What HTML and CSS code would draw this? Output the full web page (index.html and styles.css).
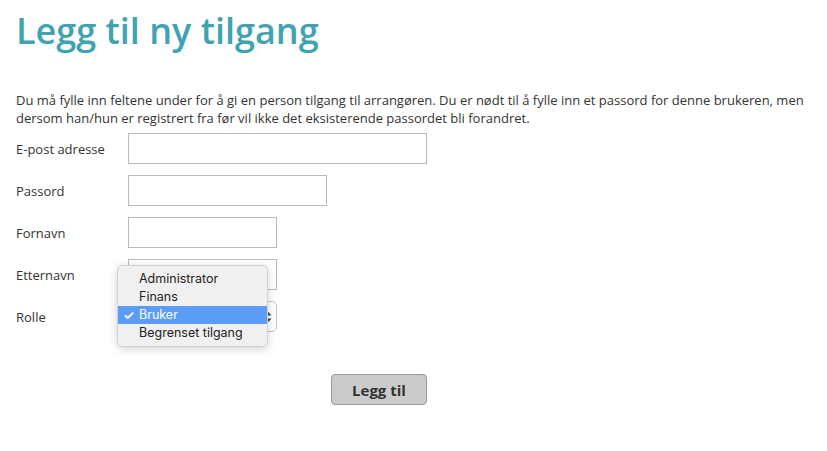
FILE: index.html
```html
<!DOCTYPE html>
<html lang="no">
<head>
  <meta charset="UTF-8">
  <meta name="viewport" content="width=device-width, initial-scale=1.0">
  <title>Legg til ny tilgang</title>
  <link rel="stylesheet" href="styles.css">
</head>
<body>

  <h1>Legg til ny tilgang</h1>

  <p class="intro">Du må fylle inn feltene under for å gi en person tilgang til arrangøren. Du er nødt til å fylle inn et passord for denne brukeren, men dersom han/hun er registrert fra før vil ikke det eksisterende passordet bli forandret.</p>

  <form class="access-form">
    <div class="row">
      <label for="email">E-post adresse</label>
      <input type="text" id="email" class="field field-wide">
    </div>
    <div class="row">
      <label for="password">Passord</label>
      <input type="password" id="password" class="field field-mid">
    </div>
    <div class="row">
      <label for="firstName">Fornavn</label>
      <input type="text" id="firstName" class="field field-short">
    </div>
    <div class="row">
      <label for="lastName">Etternavn</label>
      <input type="text" id="lastName" class="field field-short">
    </div>
    <div class="row">
      <label>Rolle</label>
      <div class="select-wrap">
        <!-- closed select, hidden under its open menu -->
        <div class="fake-select">
          <svg class="select-arrows" width="7" height="12" viewBox="0 0 7 12">
            <path d="M0.5 4.5 L3.5 1 L6.5 4.5 Z" fill="#444"/>
            <path d="M0.5 7.5 L3.5 11 L6.5 7.5 Z" fill="#444"/>
          </svg>
        </div>
        <ul class="select-menu">
          <li>Administrator</li>
          <li>Finans</li>
          <li class="selected"><span class="check">&#10003;</span>Bruker</li>
          <li>Begrenset tilgang</li>
        </ul>
      </div>
    </div>

    <div class="actions">
      <button type="button">Legg til</button>
    </div>
  </form>

</body>
</html>
```

FILE: styles.css
```css
body {
  font-family: "Open Sans", Arial, sans-serif;
  color: #333;
  margin: 0;
  padding: 0 16px;
  background: #fff;
}

h1 {
  font-size: 36px;
  font-weight: 600;
  color: #3fa3b0;
  margin: 4px 0 0 0;
  line-height: 53px;
}

.intro {
  font-size: 13px;
  line-height: 18px;
  margin: 34px 0 6px 0;
  color: #333;
}

.row {
  display: flex;
  align-items: center;
  height: 31px;
  margin-bottom: 11px;
}

.row label {
  width: 112px;
  font-size: 13px;
  flex-shrink: 0;
}

.field {
  height: 31px;
  box-sizing: border-box;
  border: 1px solid #b9b9b9;
  padding: 4px 6px;
  font-size: 13px;
}

.field-wide {
  width: 299px;
}

.field-mid {
  width: 199px;
}

.field-short {
  width: 149px;
}

.select-wrap {
  position: relative;
}

.fake-select {
  width: 149px;
  height: 31px;
  box-sizing: border-box;
  border: 1px solid #c4c4c4;
  border-radius: 5px;
  display: flex;
  align-items: center;
  justify-content: flex-end;
  padding: 0 4px 0 10px;
  background: #fff;
}

.select-menu {
  position: absolute;
  left: -11px;
  top: -36px;
  width: 149px;
  margin: 0;
  padding: 4px 0;
  list-style: none;
  background: #f0f0f0;
  border: 1px solid #d2d2d2;
  border-radius: 5px;
  box-shadow: 0 2px 8px rgba(0, 0, 0, 0.18);
  font-family: Inter, "Liberation Sans", sans-serif;
  font-size: 12.5px;
  color: #222;
}

.select-menu li {
  height: 18px;
  line-height: 18px;
  padding-left: 21px;
  position: relative;
}

.select-menu li.selected {
  background: #5b9cf7;
  color: #fff;
}

.check {
  position: absolute;
  left: 5px;
  top: 0;
  font-size: 13px;
  font-weight: 700;
}

.actions {
  padding: 31px 0 0 315px;
}

button {
  width: 96px;
  height: 31px;
  font-family: "Open Sans", Arial, sans-serif;
  font-size: 15px;
  font-weight: 700;
  color: #333;
  background: #cbcbcb;
  border: 1px solid #999;
  border-radius: 4px;
}
```
